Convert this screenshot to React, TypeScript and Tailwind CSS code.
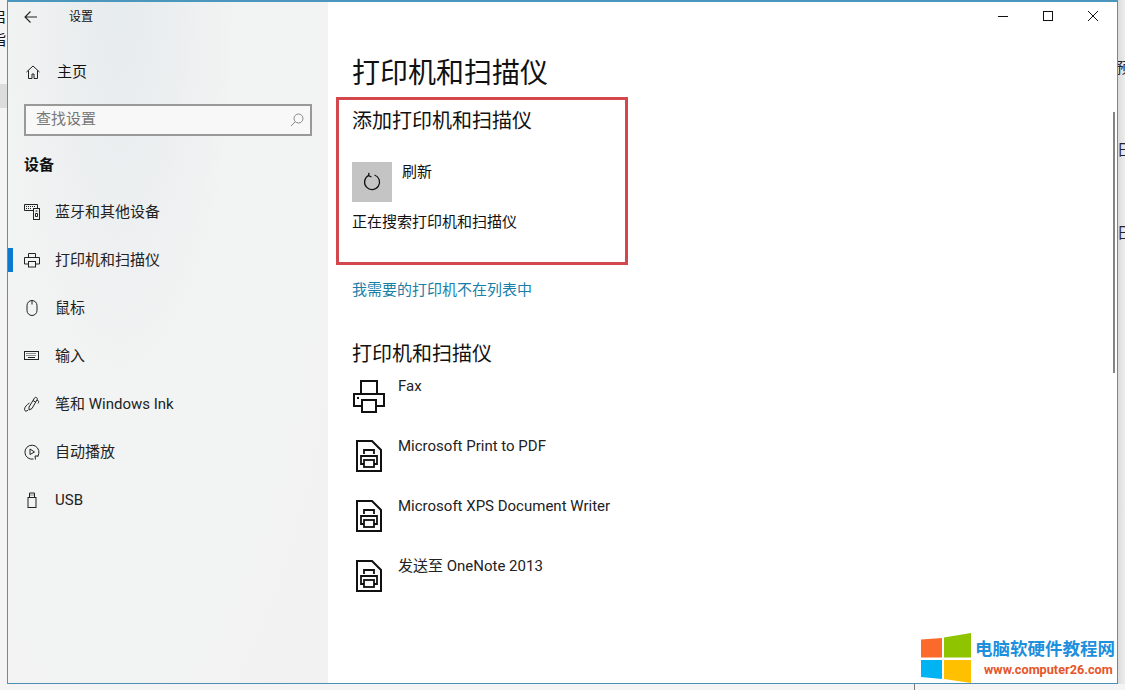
import React from 'react';

const font = { fontFamily: 'Roboto, "Noto Sans CJK SC", sans-serif' };

const Svg: React.FC<{ children: React.ReactNode }> = ({ children }) => (
  <svg width="16" height="16" viewBox="0 0 16 16" fill="none" stroke="currentColor" strokeWidth="1">
    {children}
  </svg>
);

const navItems: { label: string; active?: boolean; icon: React.ReactNode }[] = [
  {
    label: '蓝牙和其他设备',
    icon: (
      <Svg>
        <path d="M9 6.500H.5v-6h13V4" />
        <path d="M2 2.500h10M2 4.500h6" strokeDasharray="1 1" />
        <rect x="9.500" y="4.500" width="6" height="11" />
        <path d="M11.500 7h2M11.500 9.500h2v3h-2z" />
      </Svg>
    ),
  },
  {
    label: '打印机和扫描仪',
    active: true,
    icon: (
      <Svg>
        <path d="M4.500 5V1.500h7V5M4.500 12H.5V5.500h15V12h-4" />
        <rect x="4.500" y="9.500" width="7" height="5.500" />
      </Svg>
    ),
  },
  {
    label: '鼠标',
    icon: (
      <Svg>
        <path d="M3 5.500a5 5 0 0 1 10 0v5a5 5 0 0 1-10 0z" />
        <path d="M8 .5v4" />
      </Svg>
    ),
  },
  {
    label: '输入',
    icon: (
      <Svg>
        <rect x=".5" y="3.500" width="14" height="8" />
        <path d="M2.500 5.500h10M2.500 7.500h10" strokeDasharray="1 1" />
        <path d="M4 9.500h7" />
      </Svg>
    ),
  },
  {
    label: '笔和 Windows Ink',
    icon: (
      <Svg>
        <path d="M5 11 10.500 2c1-1.500 3.500 0 2.700 1.500L8 12.500l-3 1.500z" />
        <path d="M9 4.500 12 6.500M13 4c2 .5 2 2 1 3.500M5.500 7C3 8.500.5 11 .5 13.500c0 2 2.500 2 3.500.5" />
      </Svg>
    ),
  },
  {
    label: '自动播放',
    icon: (
      <Svg>
        <path d="M9.500 15A7 7 0 1 1 14.800 9.500a7 7 0 0 1-1.300 3" />
        <path d="m6 5 4.500 3L6 10.500zM14.500 12l-3.500 0 .5 3.500" />
      </Svg>
    ),
  },
  {
    label: 'USB',
    icon: (
      <Svg>
        <rect x="4" y="5.500" width="8" height="10" />
        <path d="M5.500 5.500V1h5v4.500M7 2.500v1M9 2.500v1" />
      </Svg>
    ),
  },
];

const DocPrinter = () => (
  <svg width="28" height="34" viewBox="0 0 28 34" fill="none" stroke="#111" strokeWidth="2">
    <path d="M2 2h15l9 9v21H2z" />
    <path d="M9 15v-4h10v4M9 25H6v-8h16v8h-3" strokeWidth="1.800" />
    <rect x="9" y="21" width="10" height="7" strokeWidth="1.800" />
  </svg>
);

const devices = [
  {
    name: 'Fax',
    icon: (
      <svg width="34" height="34" viewBox="0 0 34 34" fill="none" stroke="#111" strokeWidth="2">
        <path d="M9 15V2h16v13M9 27H2V15h30v12h-7" />
        <rect x="10" y="21" width="14" height="12" />
        <path d="M5 19h2" />
      </svg>
    ),
  },
  { name: 'Microsoft Print to PDF', icon: <DocPrinter /> },
  { name: 'Microsoft XPS Document Writer', icon: <DocPrinter /> },
  { name: '发送至 OneNote 2013', icon: <DocPrinter /> },
];

export default function App() {
  return (
    <div className="relative w-[1125px] h-[690px] overflow-hidden bg-white text-[#111]" style={font}>
      <div className="flex h-[684px]">
        {/* stuff behind the window */}
        <div className="relative w-[7px] overflow-hidden bg-[#f4f4f4] text-[15px]">
          <span className="absolute left-[-9px] top-[6px]">启</span>
          <span className="absolute left-[-9px] top-[29px]">指</span>
          <div className="absolute left-0 top-[84px] h-6 w-full bg-[#dcdcdc]" />
        </div>

        <div className="flex w-[1111px] border border-t-2 border-[#4a96bd] border-b-[#4a8fb5]">
          <aside className="w-[320px] shrink-0 bg-[radial-gradient(ellipse_at_35%_0%,#e6ebed_0%,#f2f3f3_40%,#f2f2f2_100%)]">
            <div className="flex h-[30px] items-center pl-[16px]">
              <svg width="14" height="14" viewBox="0 0 14 14" fill="none" stroke="#222" strokeWidth="1.100">
                <path d="M13 7H1M6.500 1.500 1 7l5.500 5.500" />
              </svg>
              <span className="ml-[31px] text-[12px]">设置</span>
            </div>
            <div className="mt-[24px] flex h-[32px] items-center pl-[18px]">
              <svg width="14" height="14" viewBox="0 0 14 14" fill="none" stroke="#222" strokeWidth="1">
                <path d="M.5 7 7 1l6.500 6M2.500 5.500v8H6V9h2v4.500h3.500v-8" />
              </svg>
              <span className="ml-[17px] text-[15px]">主页</span>
            </div>
            <div className="mx-[16px] mt-[16px] flex h-[32px] items-center justify-between border-2 border-[#999] bg-[#f8f8f8] pl-[10px] pr-[6px]">
              <span className="pb-[1px] text-[15px] text-[#777]">查找设置</span>
              <svg width="14" height="14" viewBox="0 0 14 14" fill="none" stroke="#888" strokeWidth="1">
                <circle cx="8.500" cy="5.500" r="4.500" />
                <path d="M5.200 8.800 1 13" />
              </svg>
            </div>
            <div className="mt-[17px] pl-[16px] text-[15px] font-bold leading-[24px]">设备</div>
            <nav className="mt-[11px]">
              {navItems.map(item => (
                <div key={item.label} className="relative flex h-12 items-center pl-[16px]">
                  {item.active && <div className="absolute left-0 top-[12px] h-[24px] w-[5px] bg-[#0d78d0]" />}
                  <span className="flex w-[16px] justify-center text-[#222]">{item.icon}</span>
                  <span className="ml-[15px] text-[15px] text-[#222]">{item.label}</span>
                </div>
              ))}
            </nav>
          </aside>

          <main className="relative flex-1 bg-white pl-[24px]">
            <div className="absolute right-[17px] top-[7px] flex items-center gap-[31px] text-[#111]">
              <svg width="14" height="14" viewBox="0 0 14 14" stroke="currentColor" fill="none"><path d="M2 7.500h10" /></svg>
              <svg width="14" height="14" viewBox="0 0 14 14" stroke="currentColor" fill="none"><rect x="2.500" y="2.500" width="9" height="9" /></svg>
              <svg width="14" height="14" viewBox="0 0 14 14" stroke="currentColor" fill="none"><path d="m2 2 10 10M12 2 2 12" /></svg>
            </div>
            <div className="absolute right-[2px] top-[110px] h-[261px] w-[2px] bg-[#858585]" />

            <h1 className="pt-[50px] text-[28px] font-normal leading-[44px]">打印机和扫描仪</h1>

            <section className="-ml-[16px] mt-[1px] h-[168px] w-[292px] border-[3px] border-[#d3484c] pl-[13px] pt-[7px]">
              <h2 className="text-[20px] font-normal leading-[28px]">添加打印机和扫描仪</h2>
              <div className="mt-[27px] flex">
                <div className="flex h-10 w-10 items-center justify-center bg-[#c4c4c4]">
                  <svg width="20" height="20" viewBox="0 0 20 20" fill="none" stroke="#111" strokeWidth="1.300">
                    <path d="M12.500 3A7.500 7.500 0 1 1 6.500 3.500" />
                    <path d="M7 .8 6.500 3.700 9.500 5" />
                  </svg>
                </div>
                <span className="ml-[10px] text-[15px] leading-[20px]">刷新</span>
              </div>
              <p className="mt-[10px] text-[15px] leading-[20px]">正在搜索打印机和扫描仪</p>
            </section>

            <a className="mt-[15px] block text-[15px] leading-[20px] text-[#1a7fa8]">我需要的打印机不在列表中</a>

            <h2 className="mt-[40px] text-[20px] font-normal leading-[28px]">打印机和扫描仪</h2>

            <ul className="mt-[8px]">
              {devices.map(device => (
                <li key={device.name} className="flex h-[60px] items-start">
                  <div className="flex h-[40px] w-[34px] items-center justify-center">{device.icon}</div>
                  <span className="ml-[12px] text-[15px] leading-[20px] text-[#222]">{device.name}</span>
                </li>
              ))}
            </ul>
          </main>
        </div>

        <div className="relative flex-1 overflow-hidden bg-[linear-gradient(90deg,#dcdcdc,#ececec)] text-[15px] text-[#223]">
          <span className="absolute left-[-2px] top-[57px]">预</span>
          <span className="absolute left-[-1px] top-[139px]">日</span>
          <span className="absolute left-[-1px] top-[222px]">日</span>
        </div>
      </div>

      <div className="h-[6px] bg-[#f4f4f4]">
        <div className="ml-[914px] h-full w-px bg-[#777]" />
      </div>

      {/* watermark */}
      <div className="absolute left-[921px] top-[633px] flex items-start">
        <svg width="50" height="50" viewBox="0 0 50 50">
          <path d="M0 6.500 21 5v19.500H0z" fill="#fb6a2b" />
          <path d="M23 4.500 50 0v24.500H23z" fill="#8fc400" />
          <path d="M0 27h21v19l-21-2z" fill="#00b4f4" />
          <path d="M23 27h27v23l-27-4z" fill="#ffc000" />
        </svg>
        <div className="ml-[4px] pt-[4px]">
          <div className="whitespace-nowrap text-[17.500px] font-bold leading-[24px] text-[#1d8fdc]">电脑软硬件教程网</div>
          <div className="ml-[9px] whitespace-nowrap text-[12.700px] font-bold leading-[18px] text-[#e5562a]">www.computer26.com</div>
        </div>
      </div>
    </div>
  );
}
